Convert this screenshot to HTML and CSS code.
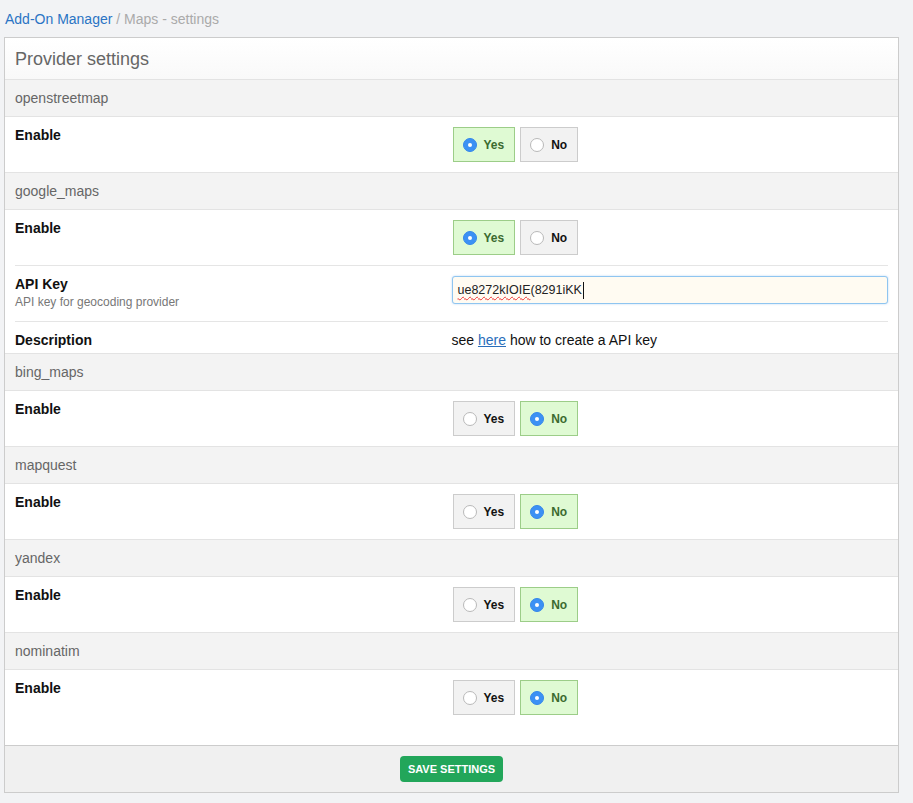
FILE: index.html
```html
<!DOCTYPE html>
<html>
<head>
<meta charset="utf-8">
<link rel="stylesheet" href="styles.css">
</head>
<body>
<div class="page">
  <div class="breadcrumb"><a class="crumb-link" href="#">Add-On Manager</a><span class="crumb-rest"> / Maps - settings</span></div>
  <div class="panel">
    <div class="panel-header">Provider settings</div>

    <div class="section">
      <div class="section-title">openstreetmap</div>
      <div class="section-body">
        <div class="row">
          <div class="label">Enable</div>
          <div class="value">
            <div class="toggle">
              <span class="opt on"><span class="radio checked"></span>Yes</span>
              <span class="opt"><span class="radio"></span>No</span>
            </div>
          </div>
        </div>
      </div>
    </div>

    <div class="section">
      <div class="section-title">google_maps</div>
      <div class="section-body">
        <div class="row">
          <div class="label">Enable</div>
          <div class="value">
            <div class="toggle">
              <span class="opt on"><span class="radio checked"></span>Yes</span>
              <span class="opt"><span class="radio"></span>No</span>
            </div>
          </div>
        </div>
        <div class="row">
          <div class="label">API Key<div class="hint">API key for geocoding provider</div></div>
          <div class="value">
            <div class="input"><span class="misspelled">ue8272kIOIE</span>(8291iKK<span class="caret"></span></div>
          </div>
        </div>
        <div class="row row-short">
          <div class="label">Description</div>
          <div class="value text">see <a class="link" href="#">here</a> how to create a API key</div>
        </div>
      </div>
    </div>

    <div class="section">
      <div class="section-title">bing_maps</div>
      <div class="section-body">
        <div class="row">
          <div class="label">Enable</div>
          <div class="value">
            <div class="toggle">
              <span class="opt"><span class="radio"></span>Yes</span>
              <span class="opt on"><span class="radio checked"></span>No</span>
            </div>
          </div>
        </div>
      </div>
    </div>

    <div class="section">
      <div class="section-title">mapquest</div>
      <div class="section-body">
        <div class="row">
          <div class="label">Enable</div>
          <div class="value">
            <div class="toggle">
              <span class="opt"><span class="radio"></span>Yes</span>
              <span class="opt on"><span class="radio checked"></span>No</span>
            </div>
          </div>
        </div>
      </div>
    </div>

    <div class="section">
      <div class="section-title">yandex</div>
      <div class="section-body">
        <div class="row">
          <div class="label">Enable</div>
          <div class="value">
            <div class="toggle">
              <span class="opt"><span class="radio"></span>Yes</span>
              <span class="opt on"><span class="radio checked"></span>No</span>
            </div>
          </div>
        </div>
      </div>
    </div>

    <div class="section section-last">
      <div class="section-title">nominatim</div>
      <div class="section-body">
        <div class="row">
          <div class="label">Enable</div>
          <div class="value">
            <div class="toggle">
              <span class="opt"><span class="radio"></span>Yes</span>
              <span class="opt on"><span class="radio checked"></span>No</span>
            </div>
          </div>
        </div>
      </div>
    </div>

    <div class="panel-footer">
      <button class="save">SAVE SETTINGS</button>
    </div>
  </div>
</div>
</body>
</html>
```
FILE: styles.css
```css
* { box-sizing: border-box; }
html, body { margin: 0; padding: 0; }
body {
  background: #f2f3f5;
  font-family: "Liberation Sans", Arial, sans-serif;
  font-size: 14px;
  color: #111;
}
.page {
  padding: 0 14px 0 4px;
}
.breadcrumb {
  padding: 9px 0 8px 1px;
  line-height: 20px;
  font-size: 14px;
}
.crumb-link { color: #2a74c4; text-decoration: none; }
.crumb-rest { color: #aaa; }

.panel {
  border: 1px solid #ccc;
  background: #fff;
}
.panel-header {
  height: 42px;
  line-height: 39px;
  padding: 2px 0 0 10px;
  font-size: 18px;
  color: #666;
  background: linear-gradient(#fff, #f9f9f9);
  border-bottom: 1px solid #e3e3e3;
}
.section {
  border-bottom: 1px solid #e3e3e3;
}
.section-title {
  height: 37px;
  line-height: 36px;
  padding-left: 10px;
  background: #f3f3f3;
  color: #666;
  border-bottom: 1px solid #e3e3e3;
}
.section-body {
  padding: 0 10px;
}
.row {
  display: grid;
  grid-template-columns: 1fr 1fr;
  padding: 10px 0;
}
.row + .row {
  border-top: 1px solid #e5e5e5;
}
.row-short { padding-bottom: 4px; }
.section-last { border-bottom: none; }
.section-last .row { padding-bottom: 30px; }

.label {
  font-weight: bold;
  line-height: 17px;
  color: #111;
}
.hint {
  font-weight: normal;
  font-size: 12px;
  color: #777;
  line-height: 18px;
}
.value { padding-left: 0; }
.text { line-height: 17px; color: #111; }
.link { color: #2a6ebb; text-decoration: underline; }

.toggle {
  display: flex;
  gap: 5px;
  margin-left: 1px;
}
.opt {
  display: inline-flex;
  align-items: center;
  height: 35px;
  padding: 0 10px 0 9px;
  border: 1px solid #ccc;
  background: #f2f2f2;
  font-size: 12px;
  font-weight: bold;
  color: #111;
  gap: 7px;
}
.opt.on {
  background: #dffad3;
  border-color: #9ccd88;
  color: #3b6a30;
}
.radio {
  width: 14px;
  height: 14px;
  border-radius: 50%;
  border: 1px solid #b9b9b9;
  background: #fff;
  display: inline-block;
  position: relative;
}
.radio.checked {
  background: #3c91f4;
  border-color: #3488ea;
}
.radio.checked::after {
  content: "";
  position: absolute;
  left: 4px;
  top: 4px;
  width: 4px;
  height: 4px;
  border-radius: 50%;
  background: #fff;
}

.input {
  height: 28px;
  border: 1px solid #8fc5f0;
  border-radius: 3px;
  background: #fffbf2;
  box-shadow: 0 0 2px rgba(100, 170, 240, 0.5);
  padding: 0 5px;
  line-height: 26px;
  font-size: 12.5px;
  color: #222;
  display: flex;
  align-items: center;
}
.misspelled {
  text-decoration: underline wavy #e33;
  text-decoration-thickness: 1px;
  text-underline-offset: 2px;
}
.caret {
  display: inline-block;
  width: 1px;
  height: 17px;
  background: #111;
  margin-left: 1px;
}

.panel-footer {
  border-top: 1px solid #ccc;
  background: #f0f0f0;
  padding: 10px 0;
  display: flex;
  justify-content: center;
}
.save {
  height: 26px;
  width: 103px;
  border: none;
  border-radius: 4px;
  background: #22a65a;
  color: #fff;
  font-family: "Liberation Sans", Arial, sans-serif;
  font-weight: bold;
  font-size: 11px;
  padding: 0;
}
```
